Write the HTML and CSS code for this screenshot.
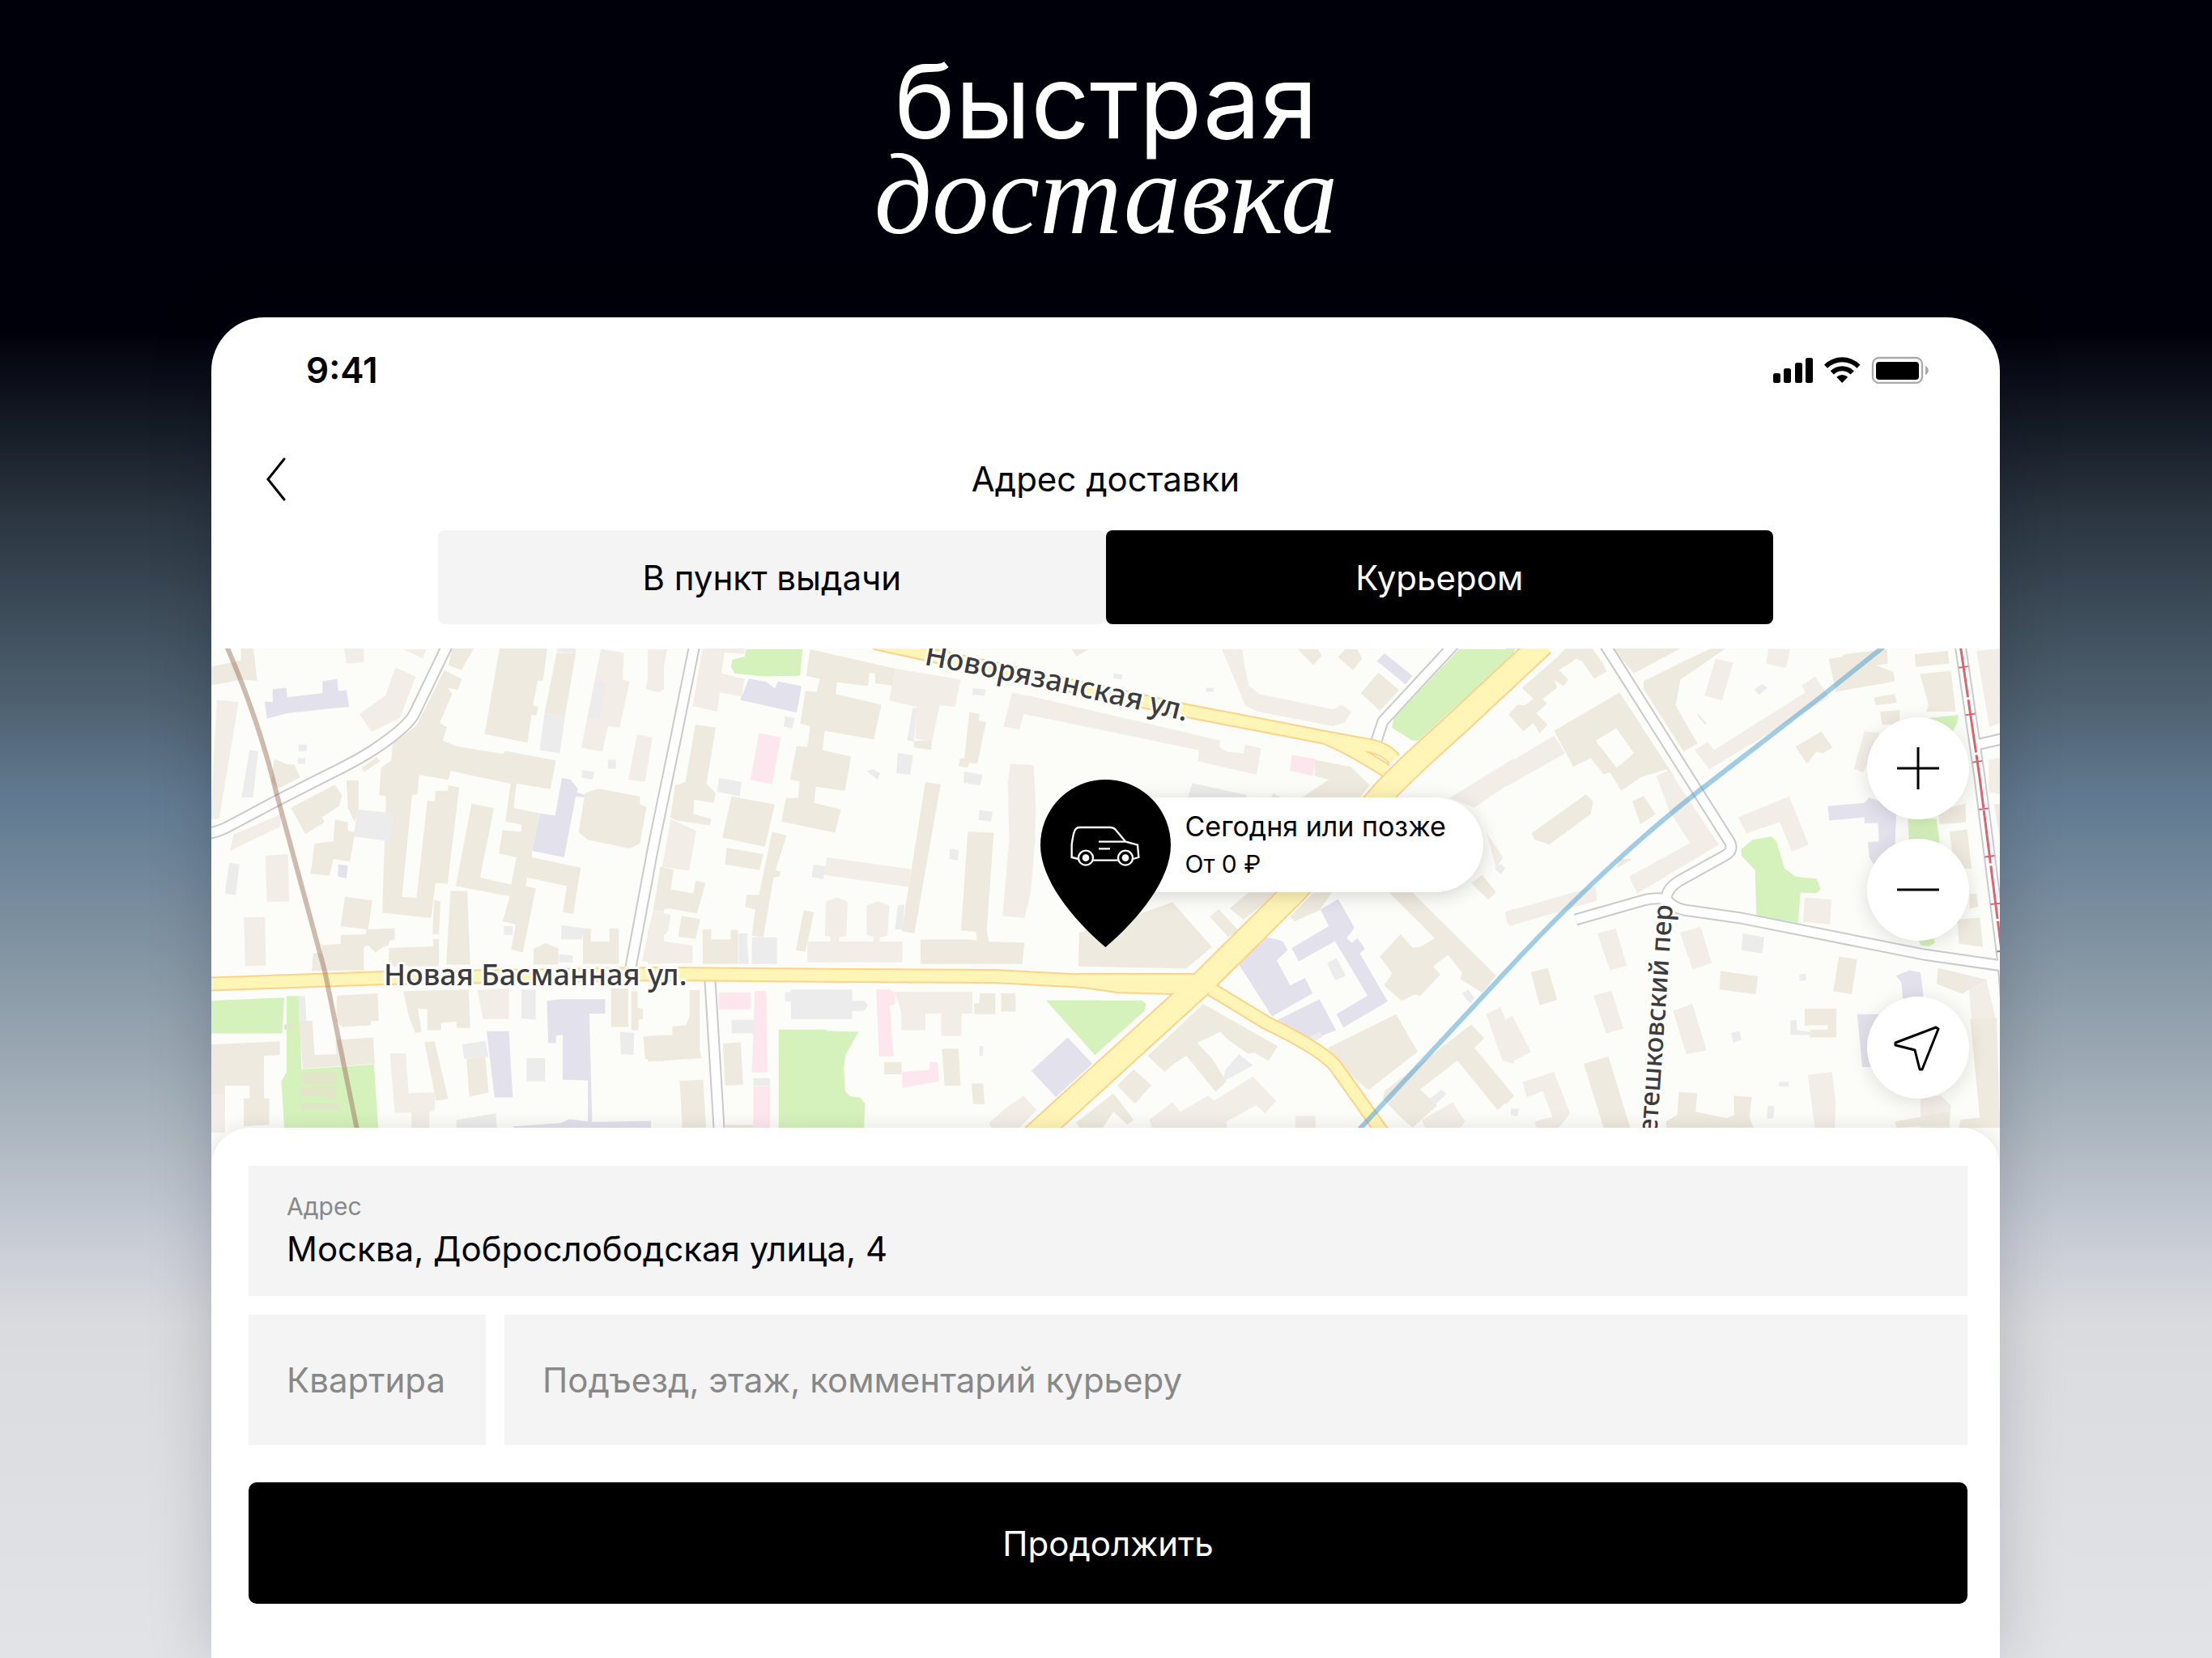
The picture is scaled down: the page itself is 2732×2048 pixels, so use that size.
FILE: index.html
```html
<!DOCTYPE html>
<html lang="ru">
<head>
    <meta charset="UTF-8">
    <meta name="viewport" content="width=device-width, initial-scale=1.0">
    <title>Адрес доставки</title>
    <link rel="stylesheet" href="styles.css">
</head>
<body>

  <h1 class="promo">
    <span class="promo_top">быстрая</span>
    <span class="promo_bottom">доставка</span>
  </h1>

  <main class="device">
    <div class="status_bar">
      <span class="clock">9:41</span>
      <svg class="status_icons" viewBox="0 0 193 34" aria-hidden="true">
        <rect x="0" y="21" width="9" height="12" rx="2.5" />
        <rect x="13" y="15" width="9" height="18" rx="2.5" />
        <rect x="27" y="8" width="9" height="25" rx="2.5" />
        <rect x="40" y="2" width="9" height="31" rx="2.5" />
        <path d="M63 10.500a31.500 31.500 0 0 1 44.500 0l-4 4.300a25.800 25.800 0 0 0-36.500 0z" />
        <path d="M70.700 18.200a20.500 20.500 0 0 1 29.100 0l-4.200 4.300a14.800 14.800 0 0 0-20.700 0z" />
        <path d="M78.300 25.800a10.200 10.200 0 0 1 13.900 0l-7 7.200z" />
        <rect x="123" y="2" width="61" height="31" rx="7.500" fill="none" stroke="#a9a9a9" stroke-width="2.300" />
        <rect x="127" y="7" width="53" height="22" rx="4" />
        <path d="M188 12c5 2 5 9 0 11z" fill="#a9a9a9" />
      </svg>
    </div>

    <header class="nav">
      <button class="back" aria-label="Назад">
        <svg viewBox="0 0 24 54"><path d="M22 2 2 27l20 25" /></svg>
      </button>
      <h2 class="title">Адрес доставки</h2>
    </header>

    <div class="tabs">
      <button class="tab">В пункт выдачи</button>
      <button class="tab tab_active">Курьером</button>
    </div>

    <section class="map">
      <svg class="map_canvas" viewBox="261 801 2209 640" preserveAspectRatio="xMidYMin slice" aria-hidden="true">

        <!-- buildings and parks, four tiles from west to east -->
        <svg x="260" y="800" width="560" height="620" viewBox="0 0 1568 1568" preserveAspectRatio="none">
          <path class="park" d="M0 1103 255 1093 248 1205H0z M263 1088H305L315 1317 565 1302 580 1500H255L245 1355 263 1325z" />
          <path class="lot" d="M320 1325h115v38h-115z M310 1372h125v38h-30v-8h-95z M310 1423h137v20h-137z M255 1177h28v16h-28z" />
          <path class="house" d="M0 60 105 40 105 0 148 0 162 104 110 100 0 118z M835 0H912L868 70 823 55z M1000 0H1165L1150 103 1132 103 1115 180 1133 185 1127 212 1110 210 1096 297 948 270z M1197 15 1263 18 1226 214 1155 205z
            M808 70 870 98 855 132 820 125 836 145 792 235 818 248 803 290 850 308 1010 332 1020 323 1195 352 1175 442 1058 425 1048 500 1140 518 1112 635 1112 655 1280 687 1255 832 1218 826 1232 745 1096 718 1090 745 1125 752 1080 952 1040 943 1055 865 1010 855 1035 777 848 745 903 487 980 502 932 718 1040 740 1058 655 997 643 1010 570 1075 575 1075 553 1020 543 1038 425 830 385 823 413 722 398 715 458 697 460 662 778 712 782 750 478 775 480 778 447 820 447 823 430 860 437 820 737 778 735 763 845 594 828 607 465 583 460 590 375 625 352 630 300 710 245 765 150z
            M220 348 265 365 290 365 310 405 235 440 210 420z M278 500 430 428 455 460 445 495 385 530 395 545 328 582z M470 415H512V510L497 543 475 500z M522 375 575 342 587 355 530 388z M430 537 475 545 475 572 500 577 482 668 425 660 412 712 346 706 360 612 425 605z
            M465 778 560 790 545 880 637 876 637 912 620 915 615 930 595 935 570 953 545 930 530 935 530 1008 350 1010 355 955 385 955 385 930 450 925 450 898 535 895 540 880 450 870z M617 938 770 933V910H790V995H617z M773 788 795 793 790 895H768z M830 760H888L898 990H815z
            M1295 455 1340 440 1485 465 1485 490 1508 497 1485 612 1450 628 1305 600 1273 577z M1117 940 1160 923 1203 940V990H1117z M1288 877H1315V918H1380V877H1412V988H1288z M437 1087 578 1080 582 1165 555 1168 555 1180 455 1185 435 1165z
            M667 1073 893 1068 898 1188 852 1188 850 1168 797 1172 797 1195 750 1195 750 1130 717 1128 730 1200 708 1203 685 1150z M740 1232 775 1230 822 1410 780 1415z M885 1285 950 1278 962 1390 895 1403z M1385 1065H1445V1185H1385z M1455 1073H1477V1125L1495 1128V1160L1480 1163V1195H1455z M1568 1210 1497 1215 1503 1285 1568 1293z
            M0 1240 240 1230V1272L185 1275V1408H203V1490L115 1495V1408H135V1368H50V1398H0z M305 1165H352L360 1272 435 1270 432 1225 563 1218 568 1300 320 1315z M1568 660 1530 822 1568 825z" />
          <path class="flat" d="M22 163 97 170 30 535 0 535z M462 0H530V45L470 50z M668 5 745 5 735 35z M640 62 710 90 655 220 557 263 515 207 605 150z M245 520 240 560 68 635 80 583z M190 650 268 645 272 792 195 795z M115 842H188L192 993 120 995z
            M1350 5 1430 15 1425 100 1450 105 1415 250 1375 245 1355 325 1282 313z M1475 272 1528 280 1503 420 1445 412z M1535 5H1568V130L1550 140 1505 128z M1530 825H1568V985L1492 980z M922 1070 1032 1065V1160H943z M620 1267H675L685 1392 778 1390 775 1445 757 1450V1500H695V1452L637 1453z M0 1398H50V1515H0z" />
          <path class="shed" d="M135 320 165 323 147 468 107 468z M305 303h28v20h-28z M302 345h26v18h-26z M65 672 100 677 87 773 50 768z M507 505 630 517 622 605 495 590z M1202 0H1263V17L1197 12z M1155 205 1226 214 1208 330 1138 320z M1335 103 1370 108 1345 222 1308 218z M1015 870h30v27h-30z M1213 867 1290 877 1285 912H1213z M1075 1068H1125V1163L1075 1158z M1093 1282H1157V1355H1093z M1415 1200 1465 1203 1463 1272 1420 1270z M870 1240 950 1228 962 1278 877 1285z M850 1475 987 1455 990 1500 850 1500z M1285 382 1328 388 1320 412 1283 405z M305 1088H327L332 1165H305z M1375 350h27v28h-27z M1205 957 1253 962V983H1205z" />
          <path class="public" d="M187 168 215 170V130L262 125 265 155 387 142V105L438 98 442 135 470 133 480 185 410 190 320 200 265 205 195 222z M442 677 475 680 470 720 440 715z M1215 407 1245 412 1270 440 1268 452 1295 460 1290 468 1263 465 1223 655 1112 635 1140 518 1192 525z M955 1198H1032L1045 1405H982z M1163 1103 1210 1098H1365V1143H1310L1320 1482 1523 1478V1500H1047V1495L1210 1485 1240 1473 1305 1480V1352L1218 1350V1210L1195 1212V1235H1168z" />
        </svg>

        <svg x="800" y="800" width="560" height="620" viewBox="0 0 1568 1568" preserveAspectRatio="none">
          <path class="park" d="M340 5H535L527 88 400 90 300 80 288 60 292 38 335 28z M453 1193H618V1197L730 1200 685 1270 678 1310 683 1385 700 1402 735 1405 752 1425 748 1500H453z M1378 1102H1568V1250L1548 1272z" />
          <path class="house" d="M165 240 235 250 203 425 235 455 228 485 160 475 158 520 220 535 215 555 100 540 78 530 95 430 130 420z M290 465 440 490 405 622 258 593z M273 625 400 645 387 695 267 677z M430 575 480 587 442 695 460 700 455 715 435 718 400 905 360 900 372 818 337 810 342 772 385 772z M43 685 90 693 80 755 158 768 165 727 200 735 170 830 75 815 20 822z M117 838 182 848 165 910 105 903z M190 880H220V912H287V882H313V988H190z
            M562 5 855 65 848 118 787 112 785 80 767 78 762 120 655 108 650 145 808 178 782 287 612 260 605 320 703 340 682 447 582 435 575 485 668 505 648 578 462 543 478 470 520 470 525 418 492 412 515 308 552 310 562 245 528 237 545 135 585 138 595 98 547 88z
            M920 290 983 290 980 320 920 312z M1112 202 1147 207 1145 228 1170 233 1140 362 1112 360 1105 375 1075 370 1080 345 1095 345z M960 420 1013 427 922 893 878 885z M1107 575 1197 578 1172 883 1180 918 1303 922 1295 988H943V912H1110L1138 915 1135 887 1083 883z M540 820 575 827 545 950 512 945z M1492 890H1568V995H1490z
            M145 1070H180V1260L187 1283 0 1293V1213L85 1210V1183L133 1180 145 1150z M110 1353 192 1350 202 1500H120z M260 1237 322 1233 330 1365 267 1368z M270 1490h95v12h-95z M818 1295h60v38h-60z M1017 1253H1075L1082 1368H1027z M1120 1362H1160L1165 1427 1125 1425z M1148 1080H1202V1145H1130L1128 1112 1147 1110z M1222 1080H1272V1137H1222z" />
          <path class="flat" d="M190 0H335V20L265 15 255 80 335 98 325 153 250 140 240 200 155 183z M0 5 67 5 40 140 0 130z M80 535 168 573 143 697 50 685z M20 822 80 835 70 885 40 915 155 930 155 985 0 988V885z M855 65 1083 100 1062 185 1010 180 983 292 925 285 930 185 835 165z M620 655 910 692 903 748 610 710z
            M655 780 692 795 687 900 663 905V918H780V903L757 898V805L795 793 835 805 830 900 803 905V918H882L880 983H552V918H632V903L612 900 617 793z M1255 362 1332 367 1337 510 1340 600 1325 760 1303 845 1227 838 1250 600 1245 420z M853 1075H1123V1143H1085V1213H1015V1143H960V1195H877V1138z M1260 140 1568 205V255L1300 207 1285 255 1230 247z M1180 1485 1235 1440 1300 1400 1345 1445 1285 1500H1190z" />
          <path class="shed" d="M247 407 325 420 318 465 240 450z M475 215 508 220 500 252 470 247z M865 328 917 337 908 397 860 392z M757 385 780 380 803 392 795 413z M917 185 932 190 920 293 897 290z M1125 127 1168 130 1165 150 1122 147z M1095 387 1158 397 1150 430 1092 423z M1147 507 1193 513 1187 543 1143 538z M1045 627 1077 632 1072 665 1042 660z M573 677 615 683 607 723 567 717z M865 805 888 803 880 880 855 880z M315 893H345V930L350 988H315z M360 905H447V988H360z M495 1068H707V1103L750 1103 762 1118 747 1135H707V1160H495z M290 1163H370V1205H290z M365 1345H423V1368H365z M1147 1245h13v30h-13z M475 1077h22v28h-22z" />
          <path class="public" d="M350 97 410 107 440 128 450 105 532 120 515 203 320 163z M1455 1220 1535 1300 1410 1403 1328 1322z" />
          <path class="clinic" d="M385 267 460 280 430 427 355 413z M245 1077H355V1130H245z M370 1073H410L413 1327H360z M365 1370H423V1500H365z M790 1068H837L855 1080V1112L837 1120 850 1277H800z M880 1325 975 1318V1295H1002L1007 1355 880 1375z" />
        </svg>

        <svg x="1270" y="800" width="600" height="620" viewBox="0 0 1568 1568" preserveAspectRatio="none">
          <path class="park" d="M1390 5H1568V20L1258 290 1240 290 1173 250 1180 220z M58 1102H365L380 1112 375 1135 215 1273z" />
          <path class="flat" d="M625 5H690L700 65 712 118 745 145 985 193 1010 178 1042 200 1022 233 985 245 740 200 700 180z M0 150 620 290 617 310 640 325 695 330 700 303 752 315 737 397 548 355 550 320 0 210z M0 365 18 370 25 520 0 820z M1360 470 1568 345V415L1440 500z M1540 825 1568 815V870L1545 860z M1480 580 1533 655 1510 690z M0 1430 25 1445 0 1470z
            M390 1475 465 1420 490 1450 580 1400 600 1415 725 1340 800 1415 765 1455 735 1430 640 1480V1500H400z M862 1463h65v37h-65z M1478 1145 1525 1123 1568 1230V1300L1530 1290z M1270 1475 1370 1420 1410 1480 1395 1500H1280z" />
          <path class="house" d="M870 5H935L947 25 920 55z M1000 30 1022 5H1062L1078 35 1048 70z M1130 78 1197 133 1135 197 1073 142z M140 5H195L155 28z M925 350 1040 372 1103 430 1060 480H865L970 412 925 400z M165 890 310 850 465 795 593 935 510 1003 162 995z M615 817 680 885 645 903 585 840z M650 815 710 765H810L695 850z M845 840 920 765H980L940 820 860 855z
            M1165 765H1240L1510 1025 1465 1078 1395 1035 1400 1015 1355 960 1307 995 1330 1022 1265 1088 1248 1083 1205 1103 1148 1055 1175 1018 1135 965 1202 895 1240 937 1265 935 1312 908z M1430 735 1465 710 1510 763 1485 788z
            M565 1113 805 1245 775 1292 730 1265 708 1268 645 1225 620 1200 545 1235 590 1280 640 1355 605 1388 510 1275 470 1300 440 1325 385 1275z M340 1317 397 1367 345 1425 287 1368z M155 1483 275 1392 340 1475 320 1490 275 1450 240 1500H165z M968 1250 1187 1145 1257 1262 1098 1382 970 1280z
            M1430 1177 1472 1220 1440 1250 1568 1400 1515 1445 1385 1290 1265 1380 1320 1430 1240 1500 1200 1465 1145 1410 1150 1385z" />
          <path class="shed" d="M530 423 705 460V467H515z M790 455 815 468H785z M275 80 305 85 300 100 275 95z M573 125h25v13h-25z M680 1270 725 1305 630 1355 635 1320z M965 985 995 970 1025 1025 990 1040z M1295 1410 1335 1380 1350 1395 1310 1430z M1400 1080 1420 1068 1440 1095 1425 1112z M1505 690 1525 675 1540 690 1525 708z" />
          <path class="public" d="M1125 42 1150 18 1240 88 1218 115z M1000 785 1053 875 1027 908 1045 922 1062 907 1087 940 1070 955 1160 1105 1017 1187 995 1145 1095 1087 990 917 873 980 850 938 970 870 943 818z M680 990 765 905 805 912 822 918 837 945 802 977 845 1055 893 1032 918 1080 787 1152z M800 1165 940 1098 993 1195 905 1230z M127 1218 207 1300 90 1403 10 1322z" />
          <path class="shed" d="M895 1225 940 1198 950 1215 910 1238z" />
          <path class="clinic" d="M850 335 928 348 918 400 845 385z" />
        </svg>

        <svg x="1860" y="800" width="620" height="620" viewBox="0 0 1568 1568" preserveAspectRatio="none">
          <path class="park" d="M735 630 770 600 830 590 845 605 870 690 905 715 970 722 983 755 970 767 920 765 912 860 782 837 778 695 735 650z M1320 220 1413 210 1410 235 1395 262z M1255 535H1345L1355 610H1260z M1288 910H1338V925L1320 933 1295 930z M0 0H38L0 20z" />
          <path class="flat" d="M655 35 710 47 675 165 620 150z M820 3 888 5 875 63 812 50z M590 320 630 295 650 320 935 140 925 118 965 90 1010 155 635 380z M0 365 150 275 185 330 0 435z M470 400 510 383 665 615 410 768 385 715 575 610 510 510z M0 825 280 745 285 790 10 870z M725 530 885 465 945 615 893 637 855 545 750 580z M1120 262 1165 265V300L1115 390 1087 378z M1470 10 1543 3V235L1510 248z M1508 350 1543 345V458L1508 450z
            M285 893 343 877 377 993 325 1008z M543 890 608 872 643 985 583 1005z M273 1087 330 1072 367 1190 313 1205z M522 1135 582 1112 627 1258 563 1270z M0 1160 20 1150 78 1262 15 1297 0 1280z M52 1357 150 1325 200 1455 165 1500H95L90 1480 145 1465 115 1385 65 1405z M933 780 1017 787 1012 865 928 857z M943 1335 1018 1325 1030 1420 1027 1500H965z M1295 1400 1360 1400 1390 1430 1385 1500H1295z M1443 1040 1500 1035 1530 1160 1455 1165z" />
          <path class="house" fill-rule="evenodd" d="M50 125 160 30 185 3H270L300 45 315 75 275 97 240 45 220 35 165 70 195 100 180 120 150 100 160 125 115 160 128 175 95 205 130 240 105 268 85 235 55 262 8 210 35 178 60 180 85 160z M330 0H550L400 80z M550 45 640 3H685L545 100 530 180 598 300 555 325 430 130 430 105z
            M150 260 355 140 530 410 500 380 470 390 420 405 360 447 325 390 305 395 265 345 210 372z M280 290 345 252 400 330 345 375z M80 580 250 458 272 480 265 520 135 615 90 600z M395 480 430 463 467 520 420 552z M905 310 985 262 1020 312 990 330 970 325 940 363z
            M1008 35 1045 30 1060 20 1190 5 1193 50 1155 55 1210 75 1215 105 1030 138z M1277 20 1380 10 1385 50 1280 60z M1150 155 1215 145 1220 172 1155 180z M1293 82 1390 72 1405 200 1312 200 1320 180z M1168 200 1230 195V240H1175z M1350 510 1435 487 1437 545 1355 552z M1385 575 1440 568 1455 690 1400 690z M1410 850 1480 843 1490 935 1415 925z M1448 770 1470 768 1475 810 1448 815z
            M78 1015 130 1000 160 1100 105 1117z M670 1010 787 1027 780 1083 667 1068z M1040 965 1097 973 1080 1083 1022 1073z M933 1127H1032V1218H950V1193H1005V1180H933z M1350 1000 1500 1037 1425 1082 1345 1050z M1450 1160 1533 1157 1543 1500H1415L1420 1475 1480 1468z M243 1300 320 1277 388 1500H305z M540 1388 597 1392 593 1450 690 1470 712 1460V1400L768 1403 760 1465 773 1500H502L500 1480 535 1460z M1525 490 1543 488V600z M0 1380 20 1405 0 1428z M1215 1480 1385 1450V1490L1220 1500z M355 660 395 660 345 690z" />
          <path class="shed" d="M775 130 800 113 817 125 790 147z M740 893 807 905 800 955 735 945z M888 1165 907 1163 910 1195 950 1200V1210H888z M703 1203 730 1198 735 1225 710 1235z M818 1430 838 1432 835 1470 815 1472z M853 1357h30v13h-30z M598 203 628 238 620 240 600 215z M917 1020h20v20h-20z M15 1440 40 1440 35 1465 15 1460z" />
          <path class="public" d="M1005 495 1120 485 1135 468 1220 500 1215 620 1150 680 1135 655 1130 608 1165 605 1162 548 1120 548V530L1010 540z M1218 1025 1260 1008 1295 1015 1305 1100H1240L1235 1045z M1097 1145 1165 1145 1140 1310H1113z" />
        </svg>

        <!-- side streets: casing first, then the surface -->
        <defs>
          <path id="lanes" d="M553 796 512 881Q504 898 460 927 440 940 403 958L342 989 280 1022Q268 1028 250 1031 M858 796 834 915 807 1045 779 1195 M877 1211 889 1410 M1796 796 1708 891 1700 915 M1982 796 2135 1038Q2143 1050 2130 1057L2074 1088Q2058 1098 2058 1111 2066 1121 2080 1124L2150 1134 2376 1179 2480 1194 M2058 1111Q2045 1108 2030 1112L1946 1136 M2441 920 2480 911 M2421 796 2445 960 2474 1190 2478 1240" />
          <path id="avenues" d="M250 1216 474 1208 820 1203 1050 1205 1229 1206 1360 1213 1484 1215 M1496 1222 1565 1264Q1640 1300 1653 1322L1712 1405 M1080 794 1461 877 1637 911 1691 921Q1712 925 1722 938 M1637 911Q1670 925 1712 952" />
          <path id="highway" d="M1270 1410 1484 1215 1598 1102 1705 984Q1725 960 1800 893L1905 795" />
        </defs>
        <use href="#lanes" class="lane_edge" />
        <use href="#lanes" class="lane" />
        <use href="#avenues" class="avenue_edge" />
        <use href="#highway" class="highway_edge" />
        <path class="avenue_fork" d="M1330 1203 1474 1203 1500 1222 1446 1228 1380 1226 1330 1219z" />
        <use href="#avenues" class="avenue" />
        <use href="#highway" class="highway" />

        <!-- metro and tram -->
        <path class="metro_brown" d="M279 796Q320 890 342 982L401 1199 444 1410" />
        <path class="metro_blue" d="M2330 796 2250 860 2097 978Q1980 1070 1860 1200L1665 1410" />
        <path class="tram" d="M2421 796 2445 960 2474 1190" />
        <path class="tram_ties" d="M2425 823 2445 960 2474 1190" />

        <path id="novoryazanskaya" d="M1141 821Q1300 850 1490 897" fill="none" />
        <text class="street"><textPath href="#novoryazanskaya">Новорязанская ул.</textPath></text>
        <text class="street" x="474" y="1217">Новая Басманная ул.</text>
        <text class="street street_small" text-anchor="end" transform="translate(2066 1118) rotate(-86)">Плетешковский пер</text>
      </svg>

      <div class="marker">
        <svg class="pin" viewBox="0 0 483 621" aria-hidden="true">
          <path d="M241 0C375 0 483 108 483 243 483 370 365 515 241 621 117 515 0 370 0 243 0 108 108 0 241 0z" />
          <g class="van">
            <path d="M141 294 116 288V240Q122 200 126 192 131 177 146 177H258Q270 177 278 185L316 230 360 242 364 288 343 294M196 299H287M216 230H316M216 256H258" />
            <circle cx="168" cy="290" r="27" />
            <circle cx="315" cy="290" r="27" />
            <circle class="hub" cx="168" cy="290" r="13" />
            <circle class="hub" cx="315" cy="290" r="13" />
          </g>
        </svg>
        <div class="bubble">
          <span class="bubble_when">Сегодня или позже</span>
          <span class="bubble_price">От 0 ₽</span>
        </div>
      </div>

      <div class="map_controls">
        <button class="round" aria-label="Приблизить"><svg viewBox="0 0 54 54"><path d="M1 27h52M27 1v52" /></svg></button>
        <button class="round" aria-label="Отдалить"><svg viewBox="0 0 54 54"><path d="M1 27h52" /></svg></button>
        <button class="round locate" aria-label="Моё местоположение"><svg viewBox="0 0 54 54"><path d="M49 2-1 21v3l24 6 6 24h3L52 4z" /></svg></button>
      </div>
    </section>

    <form class="sheet">
      <div class="field">
        <label for="address">Адрес</label>
        <input id="address" type="text" value="Москва, Доброслободская улица, 4">
      </div>
      <div class="field_row">
        <input class="plain" type="text" placeholder="Квартира" aria-label="Квартира">
        <input class="plain" type="text" placeholder="Подъезд, этаж, комментарий курьеру" aria-label="Подъезд, этаж, комментарий курьеру">
      </div>
      <button class="submit" type="button">Продолжить</button>
    </form>
  </main>

</body>
</html>
```
FILE: styles.css
```css
* {
    margin: 0;
    padding: 0;
    box-sizing: border-box;
}
body {
    display: flex;
    flex-direction: column;
    min-height: 100vh;
    overflow: hidden;
    font-family: Inter, "Noto Sans", sans-serif;
    font-size: 42px;
    color: #000;
    background: linear-gradient(#00000a 0, #00000a 20%, #2a3540 31%, #4d5f6e 42%, #617990 48%, #677f95 50%, #8596a4 58%, #a3afb9 66%, #c9cdd6 75%, #dadbdf 80%, #e2e3e7 100%);
}
button, input {
    font: inherit;
    color: inherit;
    border: 0;
    background: none;
}
button {
    cursor: pointer;
}

.promo {
    height: 392px;
    padding-top: 68px;
    color: #fff;
    font-weight: 400;
    text-align: center;
}
.promo span {
    display: block;
    line-height: 115px;
}
.promo_top {
    font-size: 127px;
}
.promo_bottom {
    font-family: "Liberation Serif", serif;
    font-size: 141px;
    font-style: italic;
}

.device {
    flex: 1;
    display: flex;
    flex-direction: column;
    margin: 0 262px 0 261px;
    border-radius: 66px 66px 0 0;
    background: #fff;
    box-shadow: 0 0 80px rgba(0, 0, 20, 0.18);
    overflow: hidden;
}

.status_bar {
    display: flex;
    align-items: center;
    justify-content: space-between;
    height: 130px;
    margin-bottom: 6px;
    padding: 0 87px 0 117px;
}
.clock {
    font-size: 44px;
    font-weight: 600;
}
.status_icons {
    width: 193px;
    height: 34px;
}

.nav {
    display: grid;
    grid-template-columns: 60px 1fr 60px;
    align-items: center;
    height: 127px;
    padding: 0 50px;
}
.back {
    display: flex;
    justify-content: center;
    height: 54px;
}
.back svg {
    width: 24px;
    height: 54px;
    fill: none;
    stroke: #000;
    stroke-width: 3;
    stroke-linecap: round;
}
.title {
    font-size: 42px;
    font-weight: 400;
    text-align: center;
}

.tabs {
    display: flex;
    margin: 0 280px 30px;
}
.tab {
    flex: 1;
    height: 116px;
    border-radius: 8px;
    background: #f4f4f4;
}
.tab_active {
    color: #fff;
    background: #000;
}

.map {
    position: relative;
    height: 640px;
    background: #fcfdf8;
}
.map_canvas {
    display: block;
    width: 100%;
    height: 100%;
}
.park { fill: #d5f2bc; }
.lot { fill: #e2e6c9; }
.house { fill: #efeadf; }
.flat { fill: #f3ede8; }
.shed { fill: #ececed; }
.public { fill: #e3e1ec; }
.clinic { fill: #fee6ee; }

.lane, .lane_edge, .avenue, .avenue_edge, .highway, .highway_edge {
    fill: none;
    stroke-linejoin: round;
}
.lane_edge { stroke: #cacacb; stroke-width: 15; }
.lane { stroke: #fff; stroke-width: 11; }
.avenue_edge { stroke: #ffd28c; stroke-width: 18; }
.avenue { stroke: #fff5b6; stroke-width: 14; }
.avenue_fork { fill: #fff5b6; stroke: #ffd28c; stroke-width: 2; }
.highway_edge { stroke: #ffd28c; stroke-width: 32; }
.highway { stroke: #fff5b6; stroke-width: 28; }

.metro_brown, .metro_blue, .tram, .tram_ties {
    fill: none;
}
.metro_brown { stroke: rgba(150, 105, 85, 0.45); stroke-width: 6; }
.metro_blue { stroke: rgba(70, 155, 210, 0.5); stroke-width: 6; }
.tram { stroke: #db6570; stroke-width: 3; stroke-dasharray: 66 3; }
.tram_ties { stroke: #db6570; stroke-width: 12; stroke-dasharray: 2 57; }

.street {
    font-family: "Noto Sans", sans-serif;
    font-size: 36px;
    font-weight: 500;
    fill: #3c3c3e;
    stroke: #fff;
    stroke-width: 6px;
    stroke-linejoin: round;
    paint-order: stroke;
}
.street_small {
    font-size: 33px;
}

.marker {
    position: absolute;
    top: 162px;
    left: 50%;
}
.pin {
    position: absolute;
    z-index: 1;
    left: -81px;
    width: 161px;
    height: 207px;
}
.van {
    fill: none;
    stroke: #fff;
    stroke-width: 7;
}
.van circle {
    fill: #000;
}
.van .hub {
    fill: #fff;
    stroke: none;
}
.bubble {
    display: flex;
    flex-direction: column;
    justify-content: center;
    gap: 2px;
    height: 117px;
    margin-top: 22px;
    padding: 0 46px 0 98px;
    border-radius: 0 59px 59px 0;
    background: #fff;
    box-shadow: 0 4px 24px rgba(0, 0, 0, 0.16);
    white-space: nowrap;
}
.bubble_when {
    font-size: 34px;
    line-height: 44px;
}
.bubble_price {
    font-size: 30px;
    line-height: 44px;
}

.map_controls {
    position: absolute;
    top: 85px;
    right: 38px;
    display: flex;
    flex-direction: column;
    gap: 24px;
}
.round {
    display: flex;
    align-items: center;
    justify-content: center;
    width: 126px;
    height: 126px;
    border-radius: 50%;
    background: #fff;
    box-shadow: 0 4px 24px rgba(0, 0, 0, 0.12);
}
.round svg {
    width: 54px;
    height: 54px;
    overflow: visible;
    fill: none;
    stroke: #000;
    stroke-width: 3;
    stroke-linejoin: round;
}
.locate {
    margin-top: 45px;
}

.sheet {
    position: relative;
    flex: 1;
    display: flex;
    flex-direction: column;
    margin-top: -48px;
    padding: 47px 40px 67px 46px;
    border-radius: 48px 48px 0 0;
    background: #fff;
    box-shadow: 0 0 24px rgba(0, 0, 0, 0.1);
}
.field {
    display: flex;
    flex-direction: column;
    justify-content: center;
    height: 161px;
    margin-bottom: 23px;
    padding: 0 47px;
    background: #f4f4f4;
}
.field label {
    font-size: 30px;
    line-height: 44px;
    color: #888;
}
.field input {
    height: 62px;
}
.field_row {
    display: grid;
    grid-template-columns: 293px 1fr;
    gap: 23px;
    margin-bottom: 46px;
}
.plain {
    min-width: 0;
    height: 161px;
    padding-left: 47px;
    background: #f4f4f4;
}
.plain::placeholder {
    color: #888;
    opacity: 1;
}
.submit {
    height: 150px;
    border-radius: 10px;
    color: #fff;
    background: #000;
}
```
